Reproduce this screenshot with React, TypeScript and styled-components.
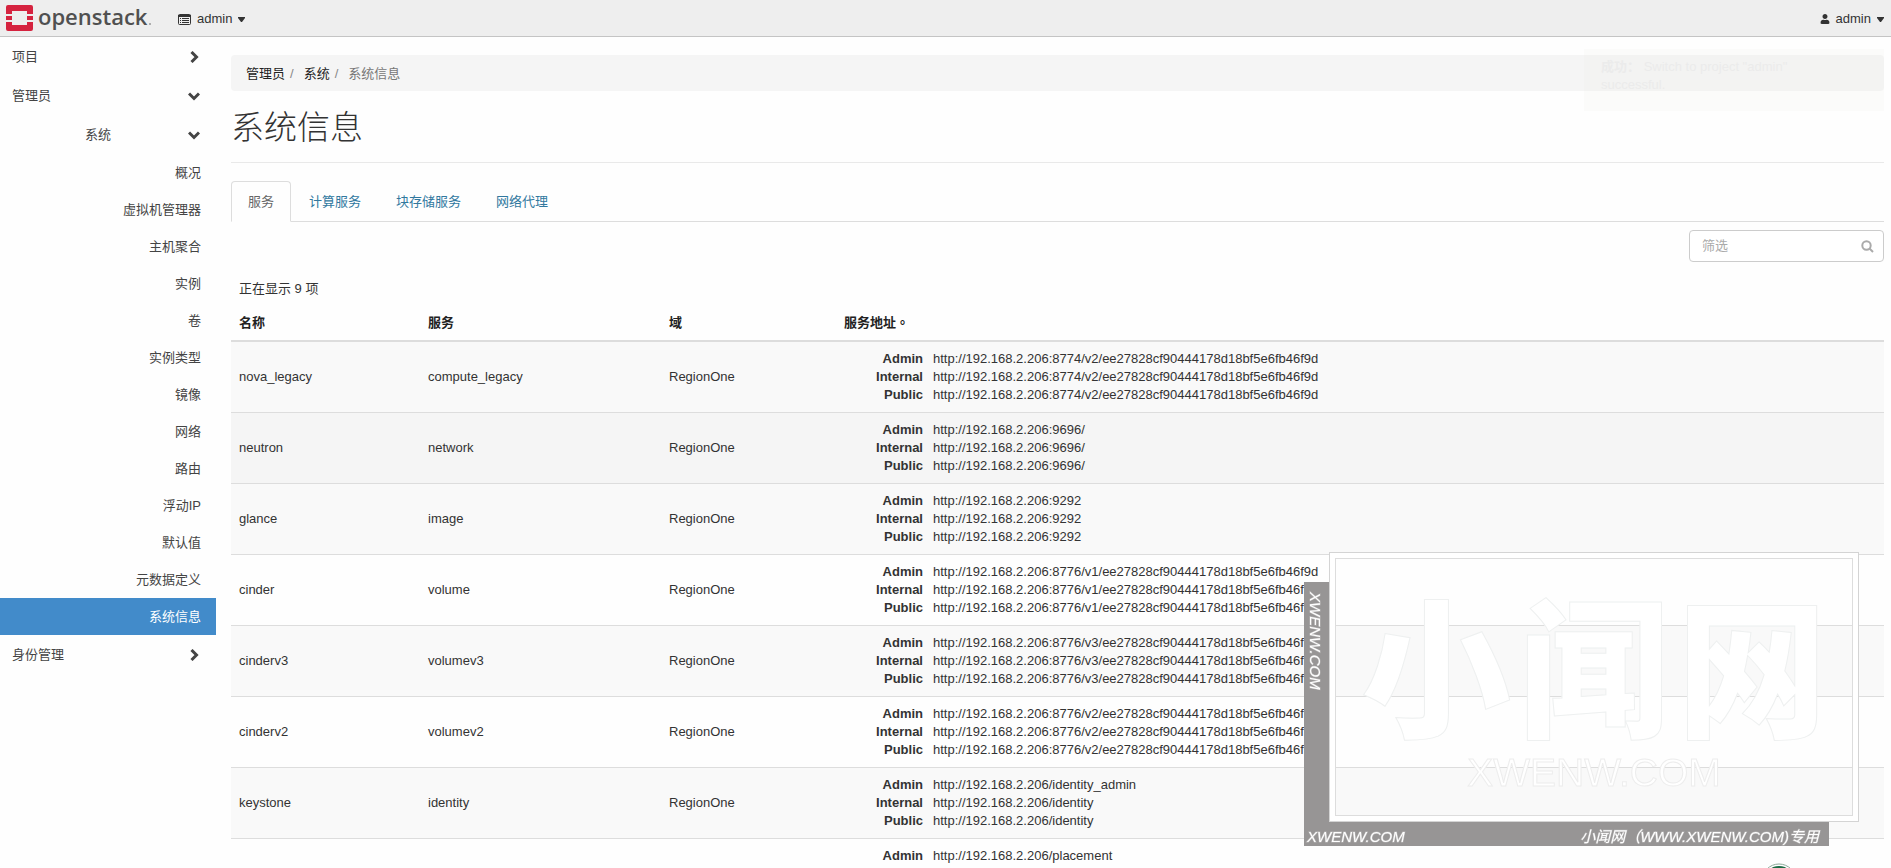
import React from 'react';
import styled, { createGlobalStyle, css } from 'styled-components';
import { FaUser } from 'react-icons/fa';

const GlobalStyle = createGlobalStyle`
  *, *::before, *::after { box-sizing: border-box; }
  html { scrollbar-width: none; }
  body {
    margin: 0;
    background: #fefefe;
    color: #333;
    font: 13px/18px "Liberation Sans", Arial, "Noto Sans CJK SC", sans-serif;
  }
  button, input { font: inherit; color: inherit; }
  a { color: inherit; text-decoration: none; }
`;

const Page = styled.div`
  height: 100vh;
  overflow: hidden;
`;

const NavBar = styled.header`
  display: flex;
  align-items: center;
  justify-content: space-between;
  height: 37px;
  padding: 0 7px 0 6px;
  background: #eeeeee;
  border-bottom: 1px solid #c4c4c4;
`;

const NavSide = styled.div`
  display: flex;
  align-items: center;
  gap: 24px;
`;

const Brand = styled.a`
  display: block;
  height: 36px;
`;

const NavButton = styled.button`
  display: flex;
  align-items: center;
  gap: 6px;
  padding: 2px 0 0;
  border: 0;
  background: none;
`;

const Shell = styled.div`
  display: flex;
`;

const SideBar = styled.nav`
  flex: 0 0 216px;
`;

const List = styled.ul`
  list-style: none;
  margin: 0;
  padding: 0;
`;

const Group = styled.button<{ $nested?: boolean }>`
  display: flex;
  align-items: center;
  justify-content: space-between;
  width: 100%;
  height: 39px;
  padding: 0 16px 0 ${(p) => (p.$nested ? 85 : 12)}px;
  border: 0;
  background: none;
  color: #444;
`;

const SideLink = styled.a<{ $active?: boolean }>`
  display: block;
  padding: 10px 15px 9px;
  text-align: right;
  color: #444;
  ${(p) =>
    p.$active &&
    css`
      background: #428bca;
      color: #fff;
    `}
`;

const Content = styled.main`
  flex: 1;
  min-width: 0;
  padding: 18px 7px 0 15px;
`;

const Crumbs = styled.ol`
  display: flex;
  list-style: none;
  margin: 0;
  padding: 10px 15px 8px;
  border-radius: 4px;
  background: #f5f5f5;
  color: #777;

  li + li::before {
    content: '/';
    padding: 0 10px 0 5px;
    color: #888;
  }
  a { color: #222; }
`;

const Title = styled.h1`
  margin: 0 0 18px;
  padding: 19px 0 16px;
  border-bottom: 1px solid #e9e9e9;
  font-size: 33px;
  font-weight: 300;
  line-height: 36px;
`;

const Tabs = styled.div`
  display: flex;
  gap: 1px;
  border-bottom: 1px solid #ddd;
`;

const Tab = styled.button<{ $active?: boolean }>`
  margin-bottom: -1px;
  padding: 11px 16px 10px;
  border: 1px solid ${(p) => (p.$active ? '#ddd' : 'transparent')};
  border-bottom-color: ${(p) => (p.$active ? '#fefefe' : 'transparent')};
  border-radius: 4px 4px 0 0;
  background: ${(p) => (p.$active ? '#fefefe' : 'transparent')};
  color: ${(p) => (p.$active ? '#666' : '#31789e')};
`;

const Toolbar = styled.div`
  display: flex;
  justify-content: flex-end;
  padding: 8px 0 10px;
`;

const SearchBox = styled.label`
  display: flex;
  align-items: center;
  width: 195px;
  height: 32px;
  padding: 0 9px 0 12px;
  border: 1px solid #ccc;
  border-radius: 4px;
  background: #fff;
  color: #aaa;
`;

const SearchInput = styled.input`
  flex: 1;
  min-width: 0;
  padding: 0;
  border: 0;
  outline: 0;
  background: none;
  &::placeholder { color: #aaa; opacity: 1; }
`;

const Table = styled.table`
  width: 100%;
  table-layout: fixed;
  border-collapse: separate;
  border-spacing: 0;

  caption {
    padding: 8px;
    text-align: left;
  }
  th {
    padding: 8px;
    border-bottom: 2px solid #ddd;
    text-align: left;
    color: #222;
  }
  td {
    padding: 8px;
    border-bottom: 1px solid #ddd;
  }
`;

const NameCol = styled.col`width: 189px;`;
const ServiceCol = styled.col`width: 241px;`;
const RegionCol = styled.col`width: 175px;`;

const FullStop = styled.span`
  font-family: "Noto Sans CJK TC", sans-serif;
  line-height: 1;
`;

const Row = styled.tr<{ $tone: string }>`
  background: ${(p) => p.$tone};
`;

const Endpoints = styled.dl`
  display: grid;
  grid-template-columns: 79px 1fr;
  column-gap: 10px;
  margin: 0;

  dt { font-weight: bold; text-align: right; }
  dd { margin: 0; white-space: nowrap; }
`;

const Toast = styled.div`
  position: absolute;
  top: 49px;
  right: 7px;
  width: 300px;
  padding: 9px 80px 17px 17px;
  background: rgba(238, 236, 228, 0.15);
  color: #ebebeb;
`;

const Stamp = styled.aside`
  position: fixed;
  right: 32px;
  bottom: 22px;
  width: 555px;
  height: 294px;
  pointer-events: none;
`;

const StampSide = styled.div`
  position: absolute;
  left: 0;
  top: 30px;
  bottom: 0;
  width: 25px;
  padding: 10px 0 0 2px;
  background: #979595;
`;

const StampFoot = styled.div`
  position: absolute;
  left: 0;
  right: 30px;
  bottom: 0;
  display: flex;
  align-items: flex-end;
  justify-content: space-between;
  height: 25px;
  padding: 0 10px 0 3px;
  background: #979595;
`;

const StampText = styled.span<{ $vertical?: boolean }>`
  color: #fff;
  font-size: 15px;
  font-style: italic;
  white-space: nowrap;
  -webkit-text-stroke: 1px rgba(255, 255, 255, 0.3);
  ${(p) => p.$vertical && css`writing-mode: vertical-rl;`}
`;

const StampFrame = styled.div`
  position: absolute;
  top: 0;
  right: 0;
  width: 530px;
  height: 270px;
  border: 1px solid #d4d4d4;
  outline: 5px solid #fff;
  outline-offset: -6px;
  padding: 5px;
`;

const StampInner = styled.div`
  display: flex;
  flex-direction: column;
  align-items: center;
  height: 100%;
  padding-top: 24px;
  border: 1px solid #ddd;
`;

const StampTitle = styled.div`
  display: flex;
  gap: 8px;
  color: #fff;
  font: 900 150px/156px "Noto Sans CJK SC", sans-serif;
  -webkit-text-stroke: 1px #eef0f0;
  white-space: nowrap;
`;

const StampSite = styled.div`
  margin-top: 12px;
  color: #fff;
  font-size: 39px;
  line-height: 44px;
  -webkit-text-stroke: 1px #ededed;
`;

const Badge = styled.svg`
  position: fixed;
  right: 94px;
  bottom: -31px;
`;

type Item = { name: string; service: string; urls: string[]; tone: string };

const same = (url: string) => [url, url, url];
const project = 'ee27828cf90444178d18bf5e6fb46f9d';
const host = 'http://192.168.2.206';

const items: Item[] = [
  { name: 'nova_legacy', service: 'compute_legacy', urls: same(`${host}:8774/v2/${project}`), tone: '#f9f9f9' },
  { name: 'neutron', service: 'network', urls: same(`${host}:9696/`), tone: '#f5f5f5' },
  { name: 'glance', service: 'image', urls: same(`${host}:9292`), tone: '#f9f9f9' },
  { name: 'cinder', service: 'volume', urls: same(`${host}:8776/v1/${project}`), tone: '#fefefe' },
  { name: 'cinderv3', service: 'volumev3', urls: same(`${host}:8776/v3/${project}`), tone: '#f9f9f9' },
  { name: 'cinderv2', service: 'volumev2', urls: same(`${host}:8776/v2/${project}`), tone: '#fefefe' },
  {
    name: 'keystone',
    service: 'identity',
    urls: [`${host}/identity_admin`, `${host}/identity`, `${host}/identity`],
    tone: '#f9f9f9',
  },
  { name: 'placement', service: 'placement', urls: same(`${host}/placement`), tone: '#fefefe' },
];

const systemLinks = [
  '概况', '虚拟机管理器', '主机聚合', '实例', '卷', '实例类型', '镜像',
  '网络', '路由', '浮动IP', '默认值', '元数据定义', '系统信息',
];

const tabs = ['服务', '计算服务', '块存储服务', '网络代理'];
const kinds = ['Admin', 'Internal', 'Public'];

const Logo = () => (
  <svg width="148" height="36" viewBox="0 0 148 36" role="img" aria-label="openstack">
    <g fill="#d5233f">
      <path d="M2 5H25Q27 5 27 7V14H21V11H6V14H0V7Q0 5 2 5Z" />
      <path d="M0 16H6V20H0ZM21 16H27V20H21Z" />
      <path d="M0 22H6V25H21V22H27V29Q27 31 25 31H2Q0 31 0 29Z" />
    </g>
    <text x="32" y="25" fill="#505050" fontFamily="'Open Sans', sans-serif" fontSize="22" fontWeight="600">openstack</text>
    <circle cx="144" cy="24" r="1" fill="#999" />
  </svg>
);

const Caret = () => (
  <svg width="7" height="5" viewBox="0 0 7 5" aria-hidden="true">
    <path d="M0 0H7V1L4 5H3L0 1Z" fill="currentColor" />
  </svg>
);

const Chevron = ({ open }: { open?: boolean }) => (
  <svg width="12" height="12" viewBox="0 0 12 12" fill="none" stroke="#444" strokeWidth="3" aria-hidden="true">
    <path d={open ? 'M1 3.5L6 8.5L11 3.5' : 'M3.5 1L8.5 6L3.5 11'} />
  </svg>
);

const ListIcon = () => (
  <svg width="13" height="11" viewBox="0 0 13 11" aria-hidden="true">
    <rect x="0.5" y="0.5" width="12" height="10" rx="1" fill="none" stroke="#333" />
    <path d="M0 1H13V3H0Z" fill="#333" />
    <path d="M2 5H3M2 7H3M2 9H3M4 5H11M4 7H11M4 9H11" stroke="#333" transform="translate(0 -0.5)" />
  </svg>
);

const SearchIcon = () => (
  <svg width="13" height="13" viewBox="0 0 13 13" fill="none" stroke="#aaa" strokeWidth="2" aria-hidden="true">
    <circle cx="5.5" cy="5.5" r="4.2" />
    <path d="M8.5 8.5L12 12" />
  </svg>
);

export default function App() {
  return (
    <Page>
      <GlobalStyle />
      <NavBar>
        <NavSide>
          <Brand href="#"><Logo /></Brand>
          <NavButton><ListIcon />admin<Caret /></NavButton>
        </NavSide>
        <NavButton><FaUser size={10} />admin<Caret /></NavButton>
      </NavBar>
      <Shell>
        <SideBar>
          <Group>项目<Chevron /></Group>
          <Group>管理员<Chevron open /></Group>
          <Group $nested>系统<Chevron open /></Group>
          <List>
            {systemLinks.map((label) => (
              <li key={label}>
                <SideLink href="#" $active={label === '系统信息'}>{label}</SideLink>
              </li>
            ))}
          </List>
          <Group>身份管理<Chevron /></Group>
        </SideBar>
        <Content>
          <Crumbs>
            <li><a href="#">管理员</a></li>
            <li><a href="#">系统</a></li>
            <li>系统信息</li>
          </Crumbs>
          <Title>系统信息</Title>
          <Tabs role="tablist">
            {tabs.map((label, i) => (
              <Tab key={label} role="tab" aria-selected={i === 0} $active={i === 0}>{label}</Tab>
            ))}
          </Tabs>
          <Toolbar>
            <SearchBox>
              <SearchInput type="text" placeholder="筛选" aria-label="筛选" />
              <SearchIcon />
            </SearchBox>
          </Toolbar>
          <Table>
            <caption>正在显示 9 项</caption>
            <colgroup><NameCol /><ServiceCol /><RegionCol /><col /></colgroup>
            <thead>
              <tr><th>名称</th><th>服务</th><th>域</th><th>服务地址<FullStop>。</FullStop></th></tr>
            </thead>
            <tbody>
              {items.map((item) => (
                <Row key={item.name} $tone={item.tone}>
                  <td>{item.name}</td>
                  <td>{item.service}</td>
                  <td>RegionOne</td>
                  <td>
                    <Endpoints>
                      {kinds.map((kind, i) => (
                        <React.Fragment key={kind}>
                          <dt>{kind}</dt>
                          <dd>{item.urls[i]}</dd>
                        </React.Fragment>
                      ))}
                    </Endpoints>
                  </td>
                </Row>
              ))}
            </tbody>
          </Table>
        </Content>
      </Shell>
      <Toast role="status"><b>成功：</b> Switch to project "admin" successful.</Toast>
      <Stamp>
        <StampSide><StampText $vertical>XWENW.COM</StampText></StampSide>
        <StampFoot>
          <StampText>XWENW.COM</StampText>
          <StampText>小闻网（WWW.XWENW.COM)专用</StampText>
        </StampFoot>
        <StampFrame>
          <StampInner>
            <StampTitle><span>小</span><span>闻</span><span>网</span></StampTitle>
            <StampSite>XWENW.COM</StampSite>
          </StampInner>
        </StampFrame>
      </Stamp>
      <Badge width="36" height="36" viewBox="0 0 36 36" aria-hidden="true">
        <circle cx="18" cy="18" r="17" fill="#fff" stroke="#8aa898" />
        <circle cx="18" cy="18" r="15" fill="#1c6b45" />
      </Badge>
    </Page>
  );
}
